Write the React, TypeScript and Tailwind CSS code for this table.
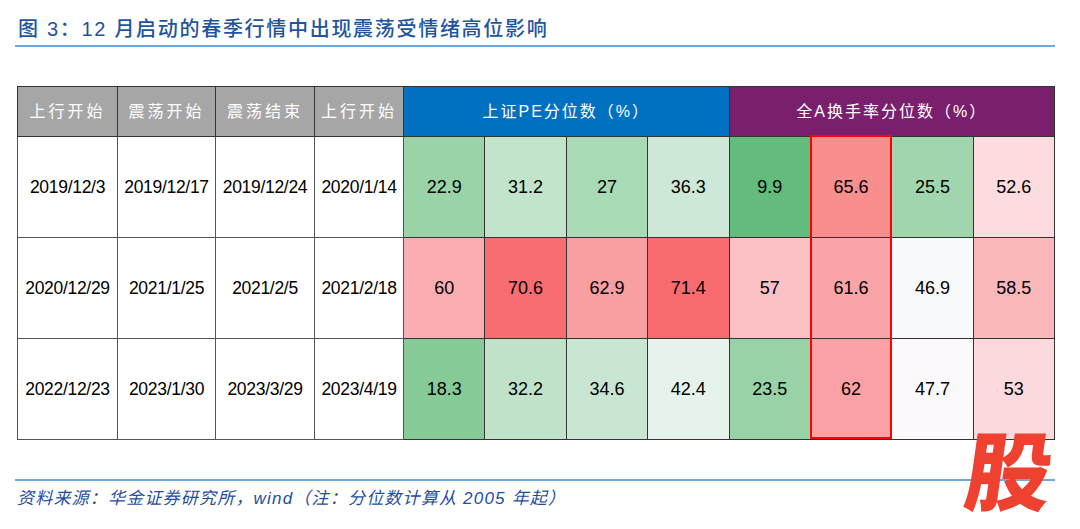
import React from "react";

const rows = [
  {
    d: ["2019/12/3", "2019/12/17", "2019/12/24", "2020/1/14"],
    v: [
      ["22.9", "bg-[#9ad3a8]"],
      ["31.2", "bg-[#c1e4ca]"],
      ["27", "bg-[#a8dab5]"],
      ["36.3", "bg-[#cde8d6]"],
      ["9.9", "bg-[#63bc7b]"],
      ["65.6", "bg-[#f98e8f]"],
      ["25.5", "bg-[#a1d5ae]"],
      ["52.6", "bg-[#fcdcdf]"],
    ],
  },
  {
    d: ["2020/12/29", "2021/1/25", "2021/2/5", "2021/2/18"],
    v: [
      ["60", "bg-[#fbaeb1]"],
      ["70.6", "bg-[#f86d71]"],
      ["62.9", "bg-[#f99ea1]"],
      ["71.4", "bg-[#f86c70]"],
      ["57", "bg-[#fbc1c4]"],
      ["61.6", "bg-[#f9a4a7]"],
      ["46.9", "bg-[#f8f9fc]"],
      ["58.5", "bg-[#fab7b9]"],
    ],
  },
  {
    d: ["2022/12/23", "2023/1/30", "2023/3/29", "2023/4/19"],
    v: [
      ["18.3", "bg-[#86cb97]"],
      ["32.2", "bg-[#bfe2c8]"],
      ["34.6", "bg-[#c9e6d3]"],
      ["42.4", "bg-[#e6f3ed]"],
      ["23.5", "bg-[#99d2a6]"],
      ["62", "bg-[#f9a1a4]"],
      ["47.7", "bg-[#fcf9fc]"],
      ["53", "bg-[#fcd9dc]"],
    ],
  },
];

const cjk = "font-['Liberation_Sans','Noto_Sans_CJK_SC',sans-serif]";

export default function App() {
  const heads = ["上行开始", "震荡开始", "震荡结束", "上行开始"];
  const widths = ["w-[100px]", "w-[98px]", "w-[99px]", "w-[89px]"];
  return (
    <div className={`relative w-[1080px] h-[529px] bg-white overflow-hidden ${cjk}`}>
      <div className="pl-[18px] pt-[16px] h-[45px] text-[20px] leading-[26px] tracking-[1.7px] font-medium text-[#1f55a0]">
        图 3：12 月启动的春季行情中出现震荡受情绪高位影响
      </div>
      <div className="ml-[15px] w-[1040px] h-[2px] bg-[#6fa8dc]" />
      <div className="relative ml-[17px] mt-[39px] w-[1038px]">
        <table className="border-collapse table-fixed w-[1038px] text-[18px] text-black">
          <thead>
            <tr className="h-[50px]">
              {heads.map((h, i) => (
                <th
                  key={i}
                  className={`${widths[i]} p-0 bg-[#a6a6a6] text-white text-[16px] font-normal tracking-[3px] border border-[#333]`}
                >
                  {h}
                </th>
              ))}
              <th colSpan={4} className="p-0 bg-[#0070c0] text-white text-[16px] font-normal tracking-[2px] border border-[#333]">
                上证PE分位数（%）
              </th>
              <th colSpan={4} className="p-0 bg-[#7a1f6d] text-white text-[16px] font-normal tracking-[2px] border border-[#333]">
                全A换手率分位数（%）
              </th>
            </tr>
          </thead>
          <tbody>
            {rows.map((r, ri) => (
              <tr key={ri} className="h-[101px]">
                {r.d.map((d, i) => (
                  <td key={i} className="p-0 text-center whitespace-nowrap border border-[#555] text-[17.5px] tracking-[-0.3px]">
                    {d}
                  </td>
                ))}
                {r.v.map(([t, c], i) => (
                  <td key={i} className={`p-0 text-center w-[81.5px] border border-[#333] ${c}`}>
                    {t}
                  </td>
                ))}
              </tr>
            ))}
          </tbody>
        </table>
        <div className="absolute left-[793px] top-[49px] w-[82px] h-[304px] border-2 border-[#ff0000] pointer-events-none" />
      </div>
      <div className="ml-[15px] mt-[39px] w-[1040px] h-[2px] bg-[#6fa8dc]" />
      <div className="pl-[17px] pt-[5px] text-[17px] italic text-[#1f4ea0] tracking-[1.2px]">
        资料来源：华金证券研究所，wind（注：分位数计算从 2005 年起）
      </div>
      <div className="absolute left-[967px] top-[424px] text-[86px] leading-[86px] font-black text-[#ef4130] font-['Noto_Sans_CJK_SC',sans-serif] skew-x-[-8deg]">
        股
      </div>
    </div>
  );
}
